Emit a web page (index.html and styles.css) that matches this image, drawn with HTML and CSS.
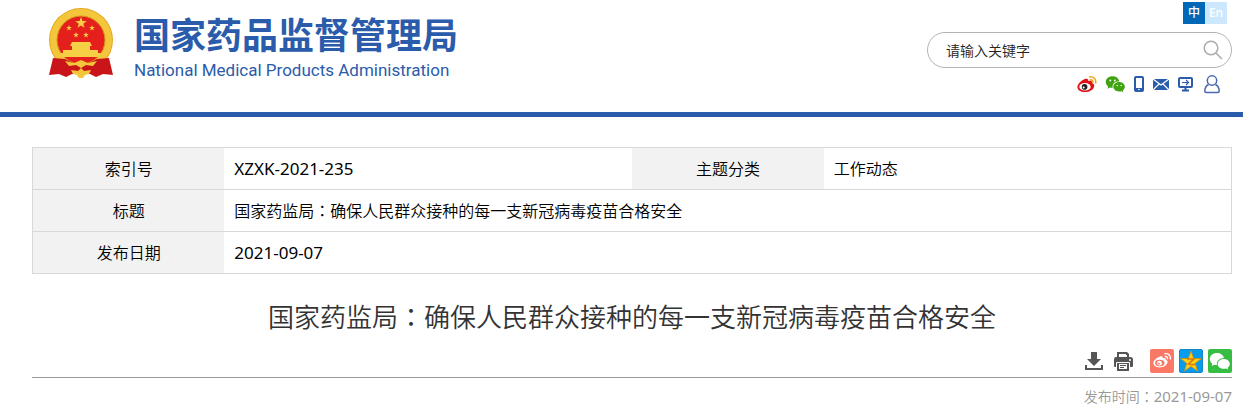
FILE: index.html
```html
<!DOCTYPE html>
<html lang="zh-CN">
<head>
<meta charset="utf-8">
<meta name="viewport" content="width=device-width, initial-scale=1">
<title>国家药监局</title>
<link rel="stylesheet" href="styles.css">
</head>
<body>
<svg class="symbols" aria-hidden="true">
  <symbol id="star" viewBox="-10 -10 20 20"><path d="M0-10 2.4-3.2 9.5-3.1 3.8 1.2 5.9 8.1 0 4-5.9 8.1-3.8 1.2-9.5-3.1-2.4-3.2Z"/></symbol>
  <symbol id="wechat" viewBox="0 0 22 18">
    <path d="M8 1C3.700 1 .8 3.700.8 7c0 2 1 3.600 2.500 4.700L2.600 14l2.700-1.300c.9.300 1.700.4 2.700.4C7.200 9 10.600 6.100 15 6.100 14.300 3.100 11.500 1 8 1Z"/>
    <path d="M14.800 6.900c-3.500 0-6.100 2.300-6.100 5s2.600 4.900 6.100 4.900c.8 0 1.500-.1 2.200-.3l2.200 1.100-.6-1.900c1.300-.9 2.200-2.300 2.200-3.800 0-2.700-2.500-5-6-5Z"/>
    <g class="eyes"><circle cx="5.600" cy="5.300" r="1"/><circle cx="10.300" cy="5.300" r="1"/><circle cx="12.800" cy="10.500" r=".8"/><circle cx="16.900" cy="10.500" r=".8"/></g>
  </symbol>
</svg>
<header class="header">
  <a class="brand" href="#">
    <svg class="emblem" viewBox="0 0 66 70" aria-hidden="true">
      <circle cx="33" cy="32" r="32" fill="#e4a91e"/>
      <circle cx="33" cy="32" r="31" fill="#f3c63b"/>
      <circle cx="33" cy="32" r="24" fill="#e51f1c" stroke="#d5971c"/>
      <g fill="#f6cf45">
        <use href="#star" x="27" y="9" width="12" height="12"/>
        <use href="#star" x="18" y="17" width="6" height="6"/>
        <use href="#star" x="41" y="17" width="6" height="6"/>
        <use href="#star" x="25" y="24" width="6" height="6"/>
        <use href="#star" x="35" y="24" width="6" height="6"/>
        <path d="M24 34h18l2 4H22ZM24 38h18v4h8v4H15v-4h9ZM12 45h42l-3 4H15Z"/>
      </g>
      <path fill="#c9151a" d="m5 50 12 1 8 4 8-3 8 3 8-4 12-1 4 17-10-1-7 3-6-3H24l-6 3-7-3-10 1Z"/>
      <path fill="#f3c63b" d="m17 53 9 2 7-3 7 3 9-2-4 5-7-1-5 3-5-3-7 1ZM23 62l7 1 3-3 3 3 7-1-2 4-4 1-2 3h-4l-2-3-4-1Z"/>
    </svg>
    <span class="brand-text">
      <span class="brand-cn">国家药品监督管理局</span>
      <span class="brand-en">National Medical Products Administration</span>
    </span>
  </a>
  <div class="tools">
    <nav class="lang" aria-label="语言">
      <a class="lang-link lang-active" href="#">中</a>
      <a class="lang-link" href="#">En</a>
    </nav>
    <form class="search">
      <input class="search-input" type="text" value="请输入关键字" aria-label="关键字">
      <button class="search-button" type="button" aria-label="搜索">
        <svg width="20" height="20" viewBox="0 0 20 20" fill="none" stroke="#aaa" stroke-width="1.500"><circle cx="8" cy="8" r="6.800"/><path d="m13 13 6 6"/></svg>
      </button>
    </form>
    <nav class="quick" aria-label="快捷入口">
      <a href="#" aria-label="微博"><svg width="20" height="18" viewBox="0 0 20 18">
        <path fill="#e01218" d="M8 4c2-.8 3.500-.2 3.300 2 2.500-.8 4.200 0 3.700 2 2 .7 2.600 2 2.100 3.700C16.300 14.800 12.500 17 8 17s-7.600-2-7.600-5S4.600 5.200 8 4Z"/>
        <ellipse cx="8" cy="11.800" rx="5.700" ry="3.700" fill="#fff"/><circle cx="7.600" cy="11.900" r="2.800" fill="#222"/><circle cx="6.700" cy="12.400" r="1" fill="#fff"/>
        <path fill="none" stroke="#f4a51c" stroke-width="1.600" d="M12 2c4.500-1 7.600 2.300 6.500 6.500M12.700 4.800c2.300-.4 3.600 1 3 3"/>
      </svg></a>
      <a class="wechat-green" href="#" aria-label="微信"><svg width="21" height="18"><use href="#wechat"/></svg></a>
      <a href="#" aria-label="手机"><svg width="10" height="18" viewBox="0 0 10 18"><rect x="1" y="2" width="8" height="14" rx="1" fill="#fff" stroke="#2b5cab" stroke-width="2"/><path fill="#2b5cab" d="M1 13h8v3H1z"/><circle cx="5" cy="14.500" r=".8" fill="#fff"/></svg></a>
      <a href="#" aria-label="邮箱"><svg width="18" height="18" viewBox="0 0 18 18"><path fill="#2b5cab" d="M1 4h16v11H1z"/><path fill="none" stroke="#fff" stroke-width="1.200" d="m1 4 8 6 8-6M1 15l6-6M17 15l-6-6"/></svg></a>
      <a href="#" aria-label="电脑版"><svg width="16" height="18" viewBox="0 0 16 18" fill="none" stroke="#2b5cab"><rect x="1" y="3" width="13" height="9" rx="1" stroke-width="2"/><path stroke-width="1.200" d="M4 7.500h6M8 5l2.500 2.500L8 10"/><path stroke-width="2" d="M7.500 12v3M4 15.500h7"/></svg></a>
      <a href="#" aria-label="用户"><svg width="20" height="20" viewBox="0 0 20 20" fill="none" stroke="#4a68b1" stroke-width="1.500"><circle cx="10" cy="6.500" r="4.700"/><path d="M6.500 10.500C4 12 2.800 14 2.800 17c0 1 .5 1.500 1.500 1.500h11.400c1 0 1.500-.5 1.500-1.500 0-3-1.200-5-3.700-6.500"/></svg></a>
    </nav>
  </div>
</header>
<main class="main">
  <table class="meta">
    <tr><th scope="row">索引号</th><td>XZXK-2021-235</td><th scope="row">主题分类</th><td class="cjk">工作动态</td></tr>
    <tr><th scope="row">标题</th><td class="cjk" colspan="3">国家药监局<span class="colon" lang="zh-TW">：</span>确保人民群众接种的每一支新冠病毒疫苗合格安全</td></tr>
    <tr><th scope="row">发布日期</th><td colspan="3">2021-09-07</td></tr>
  </table>
  <h1 class="title">国家药监局<span class="colon" lang="zh-TW">：</span>确保人民群众接种的每一支新冠病毒疫苗合格安全</h1>
  <div class="actions">
    <button class="action" type="button" aria-label="下载"><svg width="24" height="24" viewBox="0 0 24 24" fill="#555"><path d="M9 3h6v7h4l-7 7-7-7h4Z"/><path d="M3 16h2v3h14v-3h2v5H3Z"/></svg></button>
    <button class="action" type="button" aria-label="打印"><svg width="24" height="24" viewBox="0 0 24 24"><path fill="#555" d="M6 3h10l2 2v4H6ZM4.500 8h15Q22 8 22 10.500V17q0 1-1 1h-2v-4H5v4H4q-1 0-1-1v-6.500Q3 8 4.500 8ZM6 14h12v8H6Z"/><path fill="#fff" d="M8 5h7v1h1v2H8ZM8 15h8v5H8Z"/><path fill="none" stroke="#fff" d="M5.500 18v-4.500h13V18"/><path stroke="#555" d="M9 16.500h6M9 18.500h4"/><circle cx="19" cy="11" r="1" fill="#fff"/></svg></button>
    <button class="action share-weibo" type="button" aria-label="分享到微博"><svg width="24" height="24" viewBox="0 0 24 24"><path fill="#fff" d="M10 7.500c2-.7 3 0 2.700 1.700 2.300-.7 3.600 0 3 1.600 2.200.8 2.300 2.300 1.300 4-1.300 2.300-4 3.600-7.300 3.600-3.700 0-6.300-1.800-6.300-4.400S7 8.500 10 7.500Z"/><ellipse cx="9.800" cy="14" rx="4.700" ry="3.200" fill="#f97866"/><circle cx="9.500" cy="14.200" r="2.400" fill="#fff"/><circle cx="8.900" cy="14.700" r=".9" fill="#f97866"/><path fill="none" stroke="#fff" stroke-width="1.400" d="M14.500 4.800c4-.8 6.700 1.800 5.700 5.700M14.700 7.500c2-.4 3.200.8 2.700 2.700"/></svg></button>
    <button class="action share-qzone" type="button" aria-label="分享到QQ空间"><svg width="22" height="22" viewBox="0 0 22 22"><g fill="#ffcf18" stroke="#d98a08" stroke-width=".7"><use href="#star" x="0" y="1" width="22" height="22"/></g><path fill="none" stroke="#d97b08" stroke-width="1.600" d="M7 9h7l-5.500 5c2 .8 4.500.8 7 .3"/></svg></button>
    <button class="action share-wechat" type="button" aria-label="分享到微信"><svg width="22" height="18"><use href="#wechat"/></svg></button>
  </div>
  <p class="published">发布时间<span class="colon" lang="zh-TW">：</span><time class="date" datetime="2021-09-07">2021-09-07</time></p>
</main>
</body>
</html>
```
FILE: styles.css
```css
* { box-sizing: border-box; }
body {
  margin: 0;
  background: #fff;
  color: #000;
  font-family: "Noto Sans", "Noto Sans CJK SC", sans-serif;
  font-weight: 400;
}
a { color: inherit; text-decoration: none; }
svg { display: block; }
button { border: 0; padding: 0; background: none; cursor: pointer; }
.symbols { position: absolute; width: 0; height: 0; }
.colon { font-family: "Noto Sans CJK TC", sans-serif; }

.header {
  display: flex;
  justify-content: space-between;
  align-items: flex-start;
  padding: 2px 11px 18px 48px;
  border-bottom: 5px solid #2b5cab;
}
.brand { display: flex; gap: 20px; padding-top: 6px; color: #2b5cab; }
.emblem { width: 66px; height: 70px; }
.brand-text { display: flex; flex-direction: column; padding-top: 8px; }
.brand-cn { font-size: 36px; line-height: 40px; font-weight: 700; }
.brand-en { font-family: Roboto, sans-serif; font-size: 17px; line-height: 28px; }

.tools { display: flex; flex-direction: column; align-items: flex-end; width: 305px; }
.lang { display: flex; padding-right: 5px; }
.lang-link {
  width: 22px;
  height: 22px;
  background: #cce8ff;
  color: #fff;
  font-size: 12px;
  line-height: 22px;
  font-weight: 500;
  text-align: center;
}
.lang-active { background: #0068b7; }
.search {
  display: flex;
  align-items: center;
  width: 100%;
  height: 36px;
  margin-top: 8px;
  padding: 0 8px 0 18px;
  border: 1px solid #b3b3b3;
  border-radius: 18px;
}
.search-input {
  flex: 1;
  min-width: 0;
  padding: 0;
  border: 0;
  outline: 0;
  background: none;
  color: #222;
  font: inherit;
  font-size: 14px;
  font-weight: 350;
}
.quick { display: flex; align-items: center; gap: 8px; margin-top: 6px; padding-right: 10px; }
.wechat-green { fill: #3fa30f; }
.eyes { fill: #fff; }

.main { padding: 30px 11px 0 32px; }
.meta { width: 100%; border-collapse: collapse; table-layout: fixed; font-size: 17px; }
.meta tr { border: 1px solid #d8d8d8; }
.meta tr:first-child td { width: 34%; }
.meta th { width: 16%; background: #f2f2f2; font-size: 16px; font-weight: 350; }
.meta th, .meta td { height: 42px; padding: 0 10px; line-height: 24px; }
.meta td { text-align: left; }
.meta .cjk { font-size: 16px; font-weight: 350; }
.title {
  margin: 22px 0 0;
  color: #333;
  font-size: 26px;
  line-height: 40px;
  font-weight: 350;
  text-align: center;
}
.actions { display: flex; justify-content: flex-end; gap: 5px; margin-top: 12px; padding-bottom: 4px; border-bottom: 1px solid #999; }
.action { display: grid; place-items: center; width: 24px; height: 24px; border-radius: 2px; }
.share-weibo { margin-left: 10px; background: #f97866; }
.share-qzone { background: #079ced; border: 1px solid #1684c8; }
.share-wechat { background: #36bd42; fill: #fff; }
.share-wechat .eyes { fill: #36bd42; }
.published { margin: 7px 0 0; color: #999; font-size: 14px; line-height: 22px; font-weight: 350; text-align: right; }
.date { font-size: 15px; font-weight: 400; }
```
